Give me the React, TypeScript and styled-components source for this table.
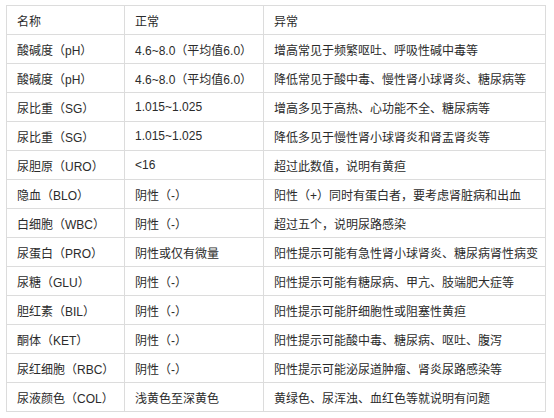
import styled, { createGlobalStyle } from "styled-components";

const GlobalStyle = createGlobalStyle`
  body {
    margin: 0;
    background: #ffffff;
    font-family: "Liberation Sans", "Noto Sans CJK SC", sans-serif;
  }
`;

const Page = styled.div`
  padding: 5px 0 0 6px;
`;

const Table = styled.table`
  width: 540px;
  border-collapse: collapse;
  table-layout: fixed;
  font-size: 12px;
  color: #2b2b2b;
`;

const Cell = styled.td`
  height: 28px;
  padding: 0 0 0 10px;
  border: 1px solid #dcdcdc;
  white-space: nowrap;
  overflow: hidden;
  vertical-align: middle;
`;

const HeadCell = styled(Cell).attrs({ as: "th" })`
  font-weight: normal;
  text-align: left;
`;

const rows: [string, string, string][] = [
  ["酸碱度（pH）", "4.6~8.0（平均值6.0）", "增高常见于频繁呕吐、呼吸性碱中毒等"],
  ["酸碱度（pH）", "4.6~8.0（平均值6.0）", "降低常见于酸中毒、慢性肾小球肾炎、糖尿病等"],
  ["尿比重（SG）", "1.015~1.025", "增高多见于高热、心功能不全、糖尿病等"],
  ["尿比重（SG）", "1.015~1.025", "降低多见于慢性肾小球肾炎和肾盂肾炎等"],
  ["尿胆原（URO）", "<16", "超过此数值，说明有黄疸"],
  ["隐血（BLO）", "阴性（-）", "阳性（+）同时有蛋白者，要考虑肾脏病和出血"],
  ["白细胞（WBC）", "阴性（-）", "超过五个，说明尿路感染"],
  ["尿蛋白（PRO）", "阴性或仅有微量", "阳性提示可能有急性肾小球肾炎、糖尿病肾性病变"],
  ["尿糖（GLU）", "阴性（-）", "阳性提示可能有糖尿病、甲亢、肢端肥大症等"],
  ["胆红素（BIL）", "阴性（-）", "阳性提示可能肝细胞性或阻塞性黄疸"],
  ["酮体（KET）", "阴性（-）", "阳性提示可能酸中毒、糖尿病、呕吐、腹泻"],
  ["尿红细胞（RBC）", "阴性（-）", "阳性提示可能泌尿道肿瘤、肾炎尿路感染等"],
  ["尿液颜色（COL）", "浅黄色至深黄色", "黄绿色、尿浑浊、血红色等就说明有问题"],
];

function App() {
  return (
    <>
      <GlobalStyle />
      <Page>
        <Table>
          <colgroup>
            <col style={{ width: 118 }} />
            <col style={{ width: 139 }} />
            <col />
          </colgroup>
          <thead>
            <tr>
              <HeadCell>名称</HeadCell>
              <HeadCell>正常</HeadCell>
              <HeadCell>异常</HeadCell>
            </tr>
          </thead>
          <tbody>
            {rows.map((r, i) => (
              <tr key={i}>
                <Cell>{r[0]}</Cell>
                <Cell>{r[1]}</Cell>
                <Cell>{r[2]}</Cell>
              </tr>
            ))}
          </tbody>
        </Table>
      </Page>
    </>
  );
}

export default App;
